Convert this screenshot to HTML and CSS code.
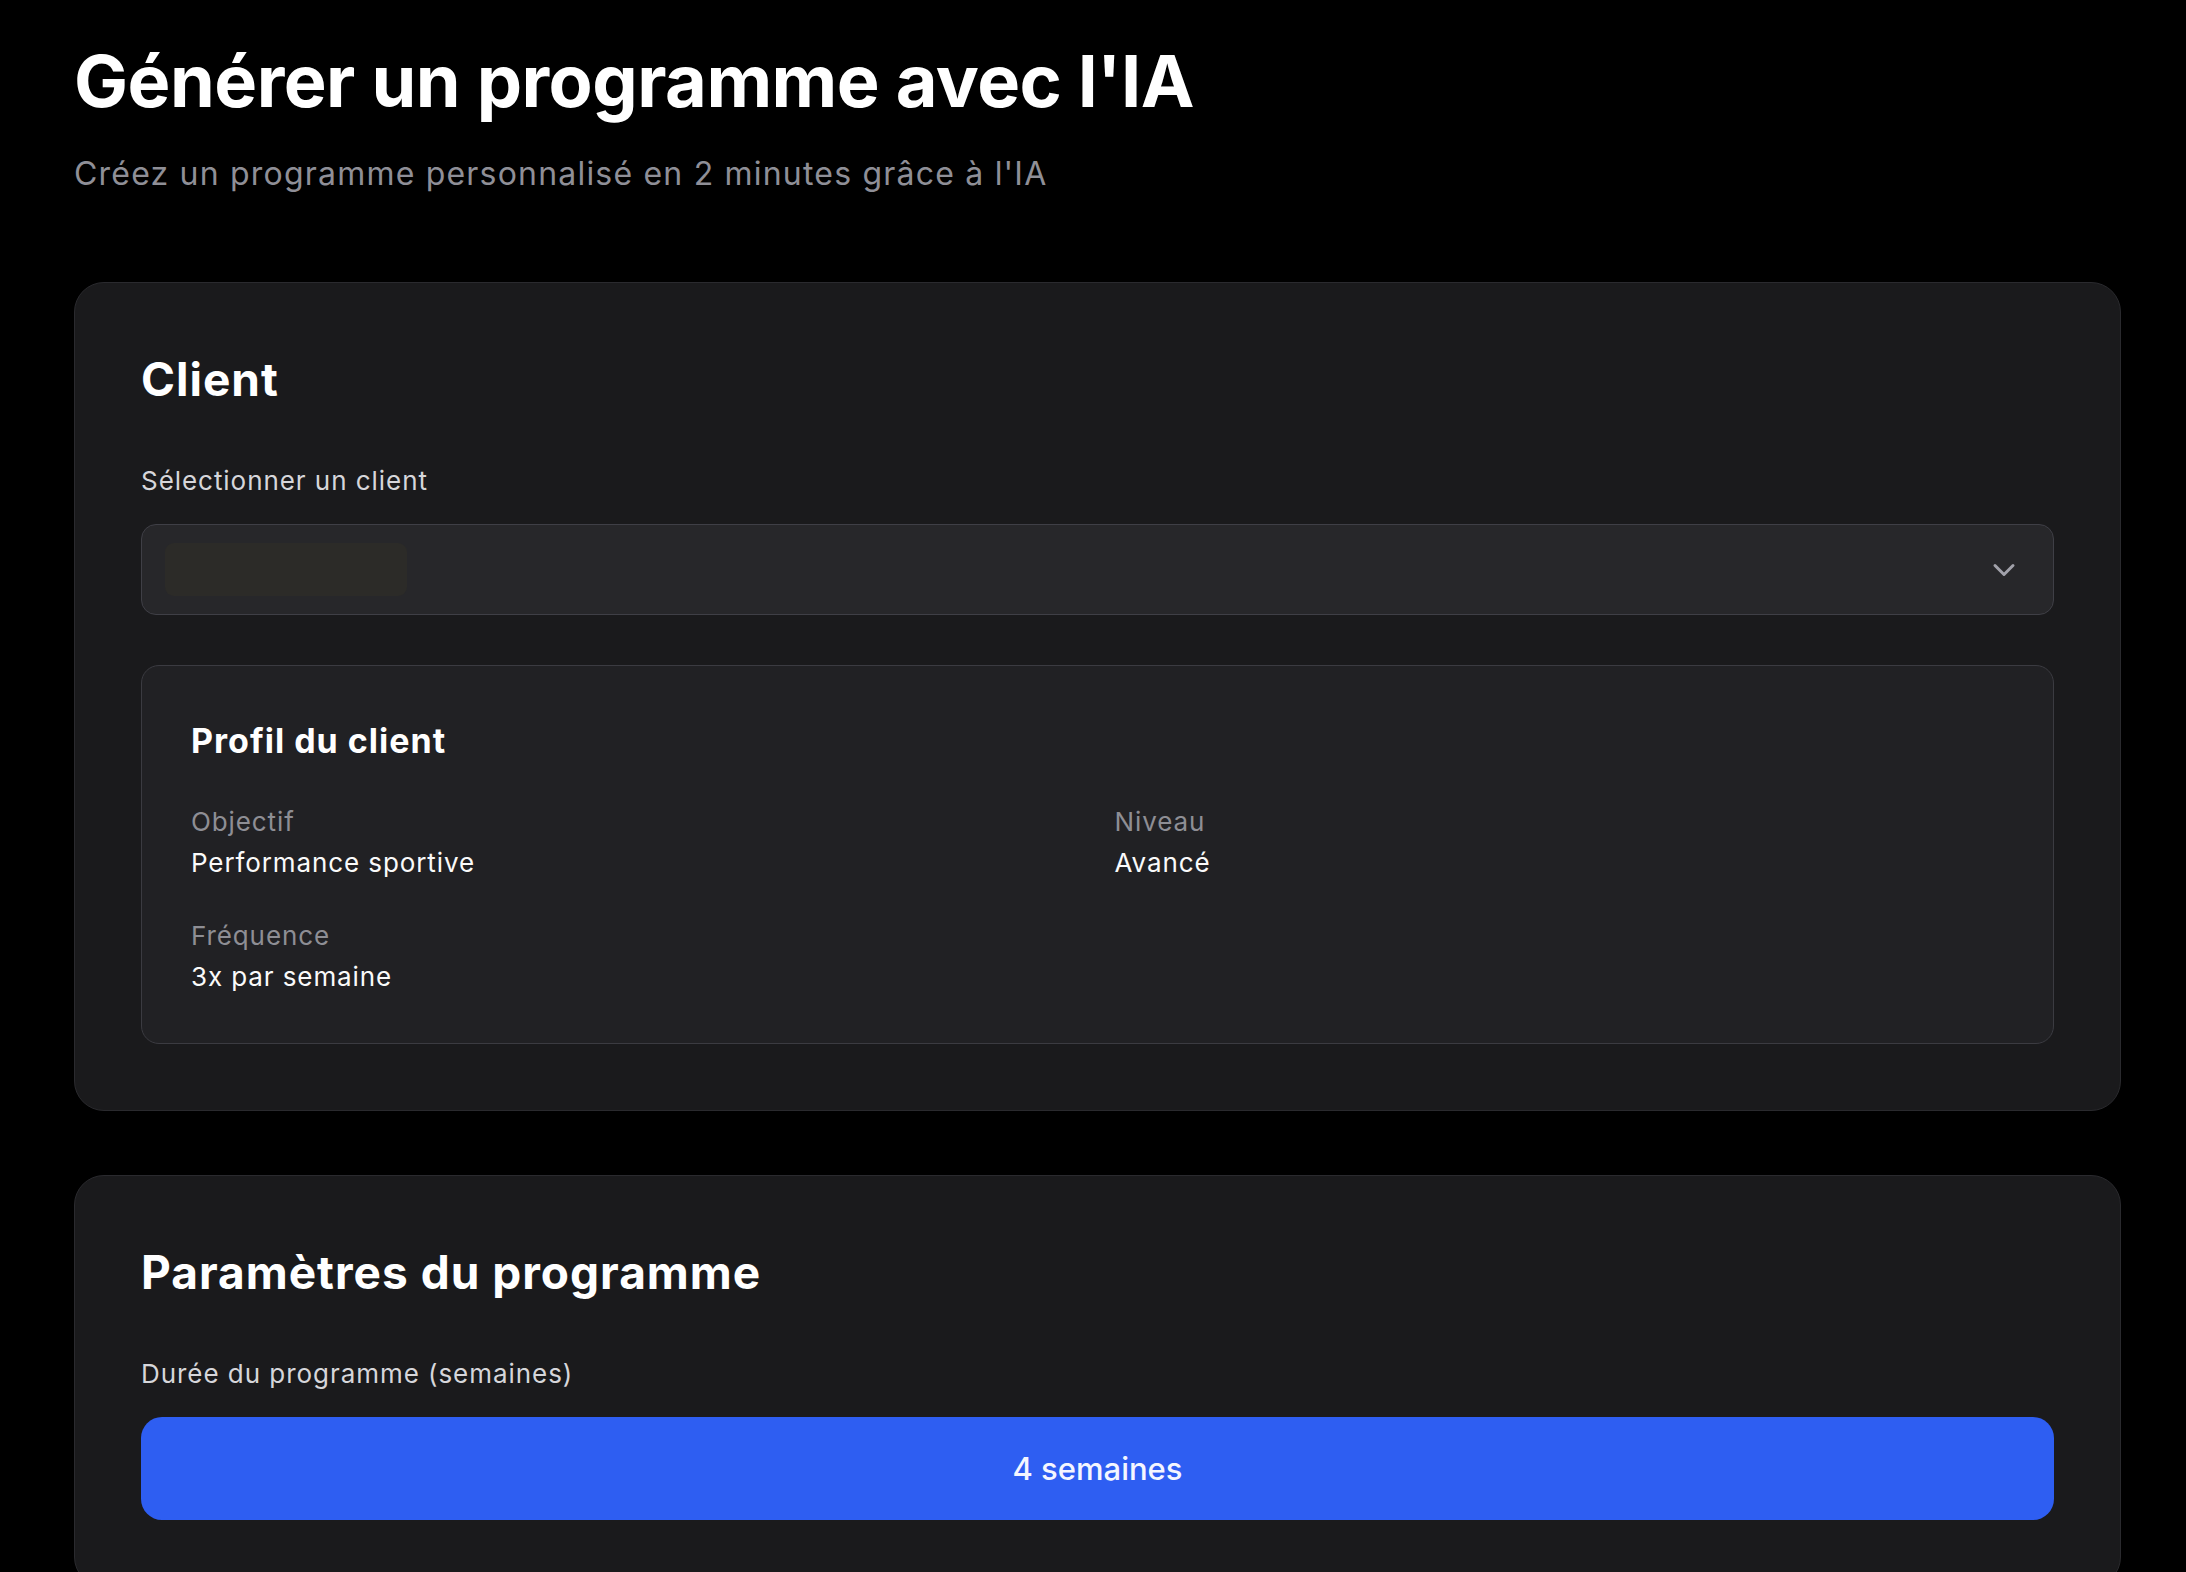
FILE: index.html
```html
<!DOCTYPE html>
<html lang="fr">
<head>
    <meta charset="UTF-8">
    <meta name="viewport" content="width=device-width, initial-scale=1.0">
    <title>Générer un programme avec l'IA</title>
    <link rel="stylesheet" href="styles.css">
</head>
<body>
    <div class="page">
        <h1 class="page-title">Générer un programme avec l'IA</h1>
        <p class="page-subtitle">Créez un programme personnalisé en 2 minutes grâce à l'IA</p>

        <!-- Client -->
        <section class="card">
            <h2 class="card-title">Client</h2>
            <label class="field-label">Sélectionner un client</label>
            <div class="select">
                <div class="skeleton"></div>
                <svg class="chevron" viewBox="0 0 24 24" fill="none" stroke="currentColor" stroke-width="2" stroke-linecap="round" stroke-linejoin="round">
                    <path d="m6 9 6 6 6-6"/>
                </svg>
            </div>

            <div class="profile">
                <h3 class="profile-title">Profil du client</h3>
                <div class="profile-grid">
                    <div class="profile-item">
                        <div class="profile-label">Objectif</div>
                        <div class="profile-value">Performance sportive</div>
                    </div>
                    <div class="profile-item">
                        <div class="profile-label">Niveau</div>
                        <div class="profile-value">Avancé</div>
                    </div>
                    <div class="profile-item">
                        <div class="profile-label">Fréquence</div>
                        <div class="profile-value">3x par semaine</div>
                    </div>
                </div>
            </div>
        </section>

        <!-- Paramètres -->
        <section class="card">
            <h2 class="card-title">Paramètres du programme</h2>
            <label class="field-label">Durée du programme (semaines)</label>
            <button class="duration-btn">4 semaines</button>
        </section>
    </div>
</body>
</html>
```

FILE: styles.css
```css
body {
    margin: 0;
    background: #000;
    color: #fff;
    font-family: Inter, "Noto Sans", sans-serif;
    letter-spacing: 0.03em;
}

.page {
    padding: 38px 65px 0 74px;
}

.page-title {
    margin: 0;
    font-size: 72px;
    line-height: 86px;
    font-weight: 700;
    letter-spacing: -0.5px;
}

.page-subtitle {
    margin: 27px 0 0;
    font-size: 32px;
    line-height: 45px;
    letter-spacing: 1.2px;
    color: #8f8f97;
}

.card {
    margin-top: 86px;
    background: #1a1a1c;
    border: 1px solid #2a2a2e;
    border-radius: 30px;
    padding: 66px;
}

.card + .card {
    margin-top: 64px;
}

.card-title {
    margin: 0 0 52px;
    font-size: 46px;
    line-height: 61px;
    font-weight: 700;
    letter-spacing: 1px;
}

.field-label {
    display: block;
    margin-bottom: 25px;
    font-size: 26px;
    line-height: 37px;
    letter-spacing: 0.95px;
    color: #d6d6da;
}

.select {
    height: 89px;
    display: flex;
    align-items: center;
    justify-content: space-between;
    padding: 0 31px 0 23px;
    background: #27272a;
    border: 1px solid #3f3f46;
    border-radius: 15px;
}

.skeleton {
    width: 242px;
    height: 53px;
    border-radius: 9px;
    background: #2c2b28;
}

.chevron {
    width: 36px;
    height: 36px;
    color: #a1a1aa;
}

.profile {
    margin-top: 50px;
    background: #212124;
    border: 1px solid #3b3b41;
    border-radius: 18px;
    padding: 50px 49px 48px;
}

.profile-title {
    margin: 0 0 37px;
    font-size: 34px;
    line-height: 50px;
    font-weight: 700;
    letter-spacing: 1px;
}

.profile-grid {
    display: grid;
    grid-template-columns: 1fr 1fr;
    column-gap: 34px;
    row-gap: 36px;
}

.profile-label {
    font-size: 26px;
    line-height: 37px;
    letter-spacing: 0.9px;
    color: #8e8e94;
}

.profile-value {
    margin-top: 4px;
    font-size: 26px;
    line-height: 37px;
    letter-spacing: 0.9px;
    color: #fafafa;
}

.duration-btn {
    display: block;
    width: 100%;
    height: 103px;
    border: none;
    border-radius: 21px;
    background: #2e5ef2;
    color: #f4f6ff;
    font-family: inherit;
    font-size: 31px;
    font-weight: 500;
    letter-spacing: 0;
    cursor: pointer;
}
```
